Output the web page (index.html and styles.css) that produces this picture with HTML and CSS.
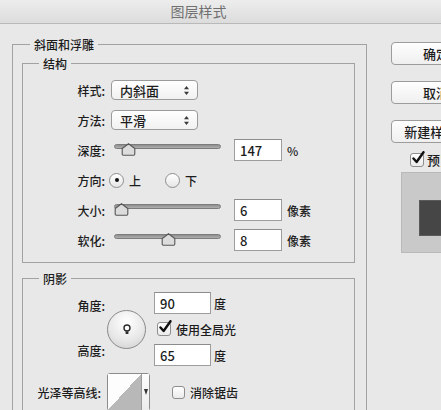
FILE: index.html
```html
<!DOCTYPE html>
<html lang="zh-CN">
<head>
    <meta charset="UTF-8">
    <meta name="viewport" content="width=device-width, initial-scale=1.0">
    <title>图层样式</title>
    <link rel="stylesheet" href="styles.css">
</head>
<body>
    <header class="titlebar">图层样式</header>

    <div class="dialog">
        <fieldset class="group outer">
            <legend>斜面和浮雕</legend>

            <!-- Structure -->
            <fieldset class="group inner structure">
                <legend>结构</legend>

                <div class="row">
                    <span class="label">样式:</span>
                    <div class="select">
                        <span>内斜面</span>
                        <svg class="updown" width="5" height="9" viewBox="0 0 5 9"><path d="M2.5 0 L5 3.2 H0 Z M2.5 9 L0 5.8 H5 Z"/></svg>
                    </div>
                </div>

                <div class="row">
                    <span class="label">方法:</span>
                    <div class="select">
                        <span>平滑</span>
                        <svg class="updown" width="5" height="9" viewBox="0 0 5 9"><path d="M2.5 0 L5 3.2 H0 Z M2.5 9 L0 5.8 H5 Z"/></svg>
                    </div>
                </div>

                <div class="row">
                    <span class="label">深度:</span>
                    <div class="slider">
                        <span class="track"></span>
                        <svg class="thumb" style="left: 7px" width="15" height="13" viewBox="0 0 15 13"><path d="M7.5 0.8 L13.8 5.6 V11 Q13.8 12.2 12.6 12.2 H2.4 Q1.2 12.2 1.2 11 V5.6 Z"/></svg>
                    </div>
                    <span class="field">147</span>
                    <span class="unit">%</span>
                </div>

                <div class="row">
                    <span class="label">方向:</span>
                    <span class="radio checked"></span>
                    <span class="radio-text">上</span>
                    <span class="radio second"></span>
                    <span class="radio-text">下</span>
                </div>

                <div class="row">
                    <span class="label">大小:</span>
                    <div class="slider">
                        <span class="track"></span>
                        <svg class="thumb" style="left: 0px" width="15" height="13" viewBox="0 0 15 13"><path d="M7.5 0.8 L13.8 5.6 V11 Q13.8 12.2 12.6 12.2 H2.4 Q1.2 12.2 1.2 11 V5.6 Z"/></svg>
                    </div>
                    <span class="field">6</span>
                    <span class="unit">像素</span>
                </div>

                <div class="row">
                    <span class="label">软化:</span>
                    <div class="slider">
                        <span class="track"></span>
                        <svg class="thumb" style="left: 47px" width="15" height="13" viewBox="0 0 15 13"><path d="M7.5 0.8 L13.8 5.6 V11 Q13.8 12.2 12.6 12.2 H2.4 Q1.2 12.2 1.2 11 V5.6 Z"/></svg>
                    </div>
                    <span class="field">8</span>
                    <span class="unit">像素</span>
                </div>
            </fieldset>

            <!-- Shading -->
            <fieldset class="group inner shading">
                <legend>阴影</legend>

                <div class="angle">
                    <span class="label angle-label">角度:</span>
                    <div class="dial">
                        <svg width="8" height="11" viewBox="0 0 8 11"><circle cx="4" cy="4" r="3" fill="#fff" stroke="#2a2a2a" stroke-width="1.4"/><rect x="2.6" y="7.4" width="2.8" height="2.6" fill="#2a2a2a"/></svg>
                    </div>
                    <div class="cell">
                        <span class="field wide">90</span>
                        <span class="unit">度</span>
                    </div>
                    <div class="cell">
                        <span class="check checked">
                            <svg width="14" height="14" viewBox="0 0 14 14"><path d="M2.5 7.5 L5.6 11 L12.5 1.2"/></svg>
                        </span>
                        <span class="check-text">使用全局光</span>
                    </div>
                    <span class="label altitude-label">高度:</span>
                    <div class="cell">
                        <span class="field wide">65</span>
                        <span class="unit">度</span>
                    </div>
                </div>

                <div class="contour-row">
                    <span class="label contour-label">光泽等高线:</span>
                    <div class="contour">
                        <span class="curve"></span>
                        <span class="drop">
                            <svg width="4" height="6" viewBox="0 0 4 6"><path d="M0 0 H4 L2 6 Z"/></svg>
                        </span>
                    </div>
                    <span class="check plain"></span>
                    <span class="check-text">消除锯齿</span>
                </div>
            </fieldset>
        </fieldset>

        <aside class="side">
            <div class="btn first">确定</div>
            <div class="btn">取消</div>
            <div class="btn last">新建样式...</div>
            <div class="preview-row">
                <span class="check checked">
                    <svg width="14" height="14" viewBox="0 0 14 14"><path d="M2.5 7.5 L5.6 11 L12.5 1.2"/></svg>
                </span>
                <span class="check-text">预览</span>
            </div>
            <div class="swatch">
                <span class="swatch-fill"></span>
            </div>
        </aside>
    </div>
</body>
</html>
```

FILE: styles.css
```css
body {
    margin: 0;
    width: 441px;
    height: 410px;
    overflow: hidden;
    background: #e8e8e8;
    font-family: "Noto Sans CJK SC", "Noto Sans", sans-serif;
    font-size: 12px;
    line-height: 17px;
    color: #1c1c1c;
}

.titlebar {
    height: 23px;
    padding-right: 44px;
    border-bottom: 1px solid #b9b9b9;
    background: linear-gradient(#ededed, #dcdcdc);
    text-align: center;
    font-size: 14px;
    line-height: 23px;
    color: #707070;
}

.dialog {
    display: flex;
    align-items: flex-start;
    padding: 12px 0 0 12px;
}

/* Group boxes */
.group {
    margin: 0;
    border: 1px solid #a2a2a2;
    min-width: 0;
}

.group legend {
    padding: 0 4px;
    font-weight: 500;
    line-height: 17px;
}

.outer {
    flex: none;
    box-sizing: border-box;
    width: 355px;
    height: 420px;
    padding: 2px 11px 0 9px;
}

.outer > legend {
    margin-left: 8px;
}

.inner {
    padding: 0;
}

.inner > legend {
    margin-left: 16px;
}

.structure {
    padding: 3px 10px 7px 0;
}

.label {
    flex: none;
    width: 82px;
    margin-right: 6px;
    text-align: right;
    font-weight: 500;
}

.row {
    display: flex;
    align-items: center;
    height: 30px;
}

/* Popup menus */
.select {
    display: flex;
    align-items: center;
    justify-content: space-between;
    box-sizing: border-box;
    width: 87px;
    height: 20px;
    padding: 0 8px;
    border: 1px solid #9b9b9b;
    border-radius: 4px;
    background: linear-gradient(#ffffff, #f1f1f1);
    font-size: 13px;
    font-weight: 500;
}

.updown path {
    fill: #3a3a3a;
}

/* Sliders */
.slider {
    position: relative;
    flex: none;
    width: 107px;
    height: 16px;
    margin: 4px 13px 0 3px;
}

.track {
    display: block;
    height: 3px;
    border: 1px solid #7c7c7c;
    border-radius: 3px;
    background: linear-gradient(#8e8e8e, #b0b0b0);
}

.thumb {
    position: absolute;
    top: -1px;
}

.thumb path {
    fill: #dcdcdc;
    stroke: #555;
    stroke-width: 1.1;
}

.field {
    box-sizing: border-box;
    width: 48px;
    height: 22px;
    padding-left: 5px;
    border: 1px solid #9d9d9d;
    border-top-color: #8c8c8c;
    background: #fff;
    font-size: 13px;
    font-weight: 500;
    line-height: 21px;
}

.field.wide {
    width: 57px;
}

.unit {
    margin-left: 5px;
    font-weight: 500;
}

/* Radio buttons */
.radio {
    position: relative;
    box-sizing: border-box;
    width: 15px;
    height: 15px;
    margin-left: -2px;
    border: 1px solid #8e8e8e;
    border-radius: 50%;
    background: linear-gradient(#ffffff, #e6e6e6);
}

.radio.checked::after {
    content: '';
    position: absolute;
    top: 4.5px;
    left: 4.5px;
    width: 4px;
    height: 4px;
    border-radius: 50%;
    background: #111;
}

.radio.second {
    margin-left: 24px;
}

.radio-text {
    margin-left: 5px;
    font-weight: 500;
}

/* Checkboxes */
.check {
    position: relative;
    flex: none;
    box-sizing: border-box;
    width: 14px;
    height: 14px;
    border: 1px solid #8e8e8e;
    border-radius: 3px;
    background: linear-gradient(#ffffff, #ebebeb);
}

.check svg {
    position: absolute;
    top: -3px;
    left: 0;
}

.check path {
    fill: none;
    stroke: #111;
    stroke-width: 2.4;
    stroke-linecap: round;
    stroke-linejoin: round;
}

.check-text {
    margin-left: 5px;
    font-weight: 500;
}

/* Shading block */
.shading {
    margin-top: 7px;
    padding: 5px 10px 0 0;
}

.angle {
    display: grid;
    grid-template-columns: 84px 47px auto;
    grid-template-rows: 22px 30px 22px;
}

.angle .label {
    width: auto;
    margin-right: 0;
    padding-right: 2px;
}

.angle-label {
    grid-column: 1;
    grid-row: 1;
    align-self: end;
}

.altitude-label {
    grid-column: 1;
    grid-row: 3;
    align-self: start;
    margin-top: -2px;
}

.dial {
    grid-column: 2;
    grid-row: 1 / 4;
    align-self: center;
    display: flex;
    align-items: center;
    justify-content: center;
    box-sizing: border-box;
    width: 39px;
    height: 39px;
    border: 1px solid #8a8a8a;
    border-radius: 50%;
    background: radial-gradient(circle at 50% 30%, #ffffff, #e9e9e9 55%, #cdcdcd);
}

.cell {
    grid-column: 3;
    display: flex;
    align-items: center;
}

.cell .unit {
    margin-left: 3px;
}

.cell .check {
    margin-left: 3px;
}

.contour-row {
    display: flex;
    align-items: center;
    margin-top: 7px;
}

.contour-label {
    width: 78px;
}

.contour {
    display: flex;
    box-sizing: border-box;
    width: 43px;
    height: 38px;
    border: 1px solid #8c8c8c;
    border-radius: 3px;
    background: #f4f4f4;
}

.curve {
    width: 33px;
    background: linear-gradient(to top left, #b8b8b8 50%, #fdfdfd 50%);
}

.drop {
    display: flex;
    align-items: center;
    justify-content: center;
    flex: 1;
    border-left: 1px solid #9a9a9a;
    background: linear-gradient(#fdfdfd, #ececec);
}

.drop path {
    fill: #333;
}

.check.plain {
    width: 13px;
    height: 13px;
    margin-left: 22px;
}

/* Right-hand column */
.side {
    flex: none;
    width: 90px;
    margin-left: 24px;
}

.btn {
    box-sizing: border-box;
    height: 23px;
    margin-bottom: 16px;
    border: 1px solid #9c9c9c;
    border-radius: 4px;
    background: linear-gradient(#fefefe, #efefef);
    text-align: center;
    font-size: 13px;
    font-weight: 500;
    line-height: 21px;
    white-space: nowrap;
}

.btn.first {
    margin-top: 6px;
}

.btn.last {
    margin-bottom: 8px;
}

.preview-row {
    display: flex;
    align-items: center;
    padding-left: 19px;
    font-size: 13px;
}

.preview-row .check-text {
    margin-left: 3px;
}

.swatch {
    box-sizing: border-box;
    width: 86px;
    height: 81px;
    margin: 4px 0 0 10px;
    padding: 27px 0 0 17px;
    border: 1px solid #b9b9b9;
    background: #c9c9c9;
}

.swatch-fill {
    display: block;
    width: 60px;
    height: 34px;
    border: 1px solid #5a5a5a;
    background: #464646;
}
```
